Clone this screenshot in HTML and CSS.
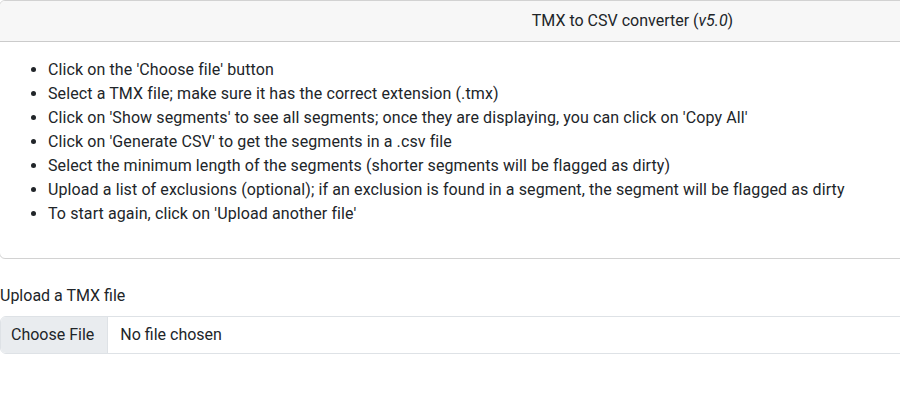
FILE: index.html
```html
<!DOCTYPE html>
<html lang="en">
<head>
<meta charset="utf-8">
<title>TMX to CSV converter</title>
<link rel="stylesheet" href="styles.css">
</head>
<body>
<div class="page">
  <div class="card">
    <div class="card-header">TMX to CSV converter (<em>v5.0</em>)</div>
    <div class="card-body">
      <ul class="steps">
        <li>Click on the 'Choose file' button</li>
        <li>Select a TMX file; make sure it has the correct extension (.tmx)</li>
        <li>Click on 'Show segments' to see all segments; once they are displaying, you can click on 'Copy All'</li>
        <li>Click on 'Generate CSV' to get the segments in a .csv file</li>
        <li>Select the minimum length of the segments (shorter segments will be flagged as dirty)</li>
        <li>Upload a list of exclusions (optional); if an exclusion is found in a segment, the segment will be flagged as dirty</li>
        <li>To start again, click on 'Upload another file'</li>
      </ul>
    </div>
  </div>
  <div class="upload">
    <label class="form-label" for="file">Upload a TMX file</label>
    <div class="file-input">
      <span class="file-btn">Choose File</span>
      <span class="file-name">No file chosen</span>
    </div>
  </div>
</div>
</body>
</html>
```
FILE: styles.css
```css
html, body {
  margin: 0;
  padding: 0;
  overflow: hidden;
  background: #fff;
}
body {
  font-family: Roboto, "Liberation Sans", sans-serif;
  font-size: 16px;
  line-height: 24px;
  color: #212529;
}
.page {
  width: 1266px;
}
.card {
  border: 1px solid rgba(0, 0, 0, 0.176);
  border-radius: 6px;
  margin-left: -1px;
}
.card-header {
  background: #f7f7f7;
  border-bottom: 1px solid rgba(0, 0, 0, 0.176);
  border-radius: 5px 5px 0 0;
  padding: 8px 16px;
  text-align: center;
}
.card-body {
  padding: 16px;
}
.steps {
  margin: 0 0 16px;
  padding-left: 32px;
  letter-spacing: 0.1px;
}
.upload {
  margin-top: 25px;
}
.form-label {
  display: block;
  margin-bottom: 8px;
}
.file-input {
  display: flex;
  height: 38px;
  box-sizing: border-box;
  border: 1px solid #dee2e6;
  border-radius: 6px;
  overflow: hidden;
  align-items: stretch;
}
.file-btn {
  background: #e9ecef;
  padding: 6px 13px 6px 10px;
  border-right: 1px solid #dee2e6;
  margin-right: 12px;
}
.file-name {
  padding: 6px 0;
}
```
